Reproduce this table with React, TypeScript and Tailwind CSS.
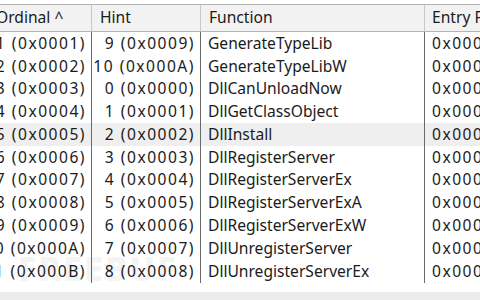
import React from "react";

const rows = [
  ["1 (0x0001)", "9 (0x0009)", "GenerateTypeLib"],
  ["2 (0x0002)", "10 (0x000A)", "GenerateTypeLibW"],
  ["3 (0x0003)", "0 (0x0000)", "DllCanUnloadNow"],
  ["4 (0x0004)", "1 (0x0001)", "DllGetClassObject"],
  ["5 (0x0005)", "2 (0x0002)", "DllInstall"],
  ["6 (0x0006)", "3 (0x0003)", "DllRegisterServer"],
  ["7 (0x0007)", "4 (0x0004)", "DllRegisterServerEx"],
  ["8 (0x0008)", "5 (0x0005)", "DllRegisterServerExA"],
  ["9 (0x0009)", "6 (0x0006)", "DllRegisterServerExW"],
  ["10 (0x000A)", "7 (0x0007)", "DllUnregisterServer"],
  ["11 (0x000B)", "8 (0x0008)", "DllUnregisterServerEx"],
];

export default function App() {
  return (
    <div
      className="relative w-[480px] h-[300px] overflow-hidden bg-white text-[#1b1b1b] text-[15.6px]"
      style={{ fontFamily: '"Noto Sans", "Liberation Sans", sans-serif' }}
    >
      <div className="h-[4px] bg-white" />
      <div className="flex h-[28px] bg-[#f2f2f2] border-t border-b border-[#b4b4b4] items-center">
        <div className="w-[92px] shrink-0 h-full flex items-center overflow-hidden border-r border-[#c8c8c8]">
          <span className="-ml-[4px] whitespace-nowrap">Ordinal ^</span>
        </div>
        <div className="w-[109px] shrink-0 h-full flex items-center pl-[8px] border-r border-[#c8c8c8]">Hint</div>
        <div className="w-[224px] shrink-0 h-full flex items-center pl-[8px] border-r border-[#c8c8c8]">Function</div>
        <div className="flex-1 h-full flex items-center pl-[7px] whitespace-nowrap">Entry Point</div>
      </div>
      <div className="flex flex-col">
        {rows.map((r, i) => (
          <div key={i} className={`flex h-[22.8px] items-center ${i === 4 ? "bg-[#efefef]" : ""}`}>
            <div className="w-[92px] shrink-0 h-full flex items-center justify-end overflow-hidden pr-[5px] border-r border-[#6a6a6a]">
              <span className="whitespace-nowrap tracking-[1.5px]">{r[0]}</span>
            </div>
            <div className="w-[109px] shrink-0 h-full flex items-center justify-end pr-[5px] border-r border-[#6a6a6a]">
              <span className="whitespace-nowrap tracking-[1.5px]">{r[1]}</span>
            </div>
            <div className="w-[224px] shrink-0 h-full flex items-center pl-[7px] border-r border-[#6a6a6a] whitespace-nowrap">{r[2]}</div>
            <div className="flex-1 h-full flex items-center pl-[7px] whitespace-nowrap tracking-[1.5px]">0x0000</div>
          </div>
        ))}
      </div>
      <div className="absolute left-0 right-0 bottom-0 h-[8px] bg-[#ececec]" />
      <div className="absolute left-[18px] bottom-[6px] text-[34px] font-black text-[#000] opacity-[0.04] tracking-[2px]">FREEBUF</div>
    </div>
  );
}
